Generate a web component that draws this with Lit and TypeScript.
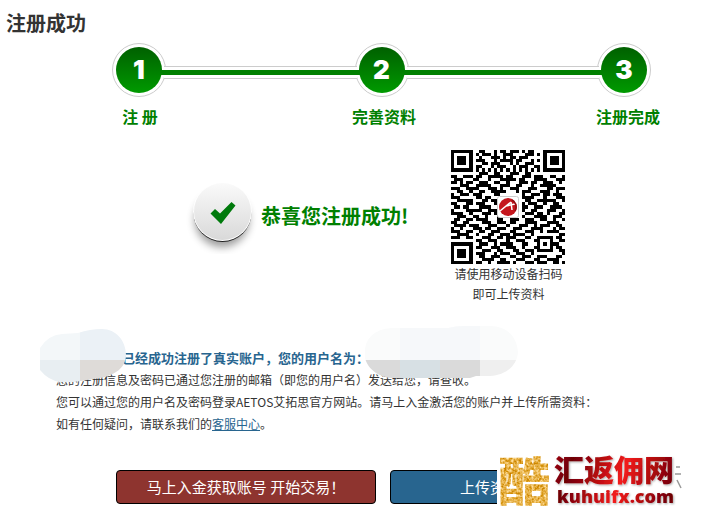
import { LitElement, html, css, svg } from "lit";
import { customElement } from "lit/decorators.js";

const QR_ROWS = [
  "1111111001100010110111010110001111111",
  "1000001010111010011100001110101000001",
  "1011101001000111010110111000001011101",
  "1011101011100010111101100010101011101",
  "1011101000110111000101001110001011101",
  "1000001011000101110010111001101000001",
  "1111111010101010101010101010101111111",
  "0000000001110011000111001100000000000",
  "1100111011001111101100011101110011001",
  "0111000110001000111110110001111000111",
  "1101011001110011001000111011001110010",
  "0001110011111000111001100010011111000",
  "1110011110001110100111000111000110111",
  "0011001001100111110001011100011100100",
  "1001110111000011000000010011101101110",
  "1110000011011000000000011110001000111",
  "0011111000110110000000001100111111001",
  "1100011011100010000000010111001001100",
  "0110110001111000000000011001110011110",
  "1000011111001110000000010011000111001",
  "1111001000111010000000001110110100011",
  "0011100110010001000000010001111001110",
  "0110011011110001100111001110011001001",
  "1100110000111001110110001111000111100",
  "0111101110001110001000111001011100110",
  "1001000111011001110011100011110001011",
  "1110011001100111000110001110010111100",
  "0011110010001100111011110010000000011",
  "1110011000111001101110001100111110110",
  "0000000011001110001001110001100010011",
  "1111111001110010111100011000101011100",
  "1000001011000111001110010001100010110",
  "1011101000111001100011001110111110011",
  "1011101011100010111001110010000000001",
  "1011101001100111000110011100111000110",
  "1000001000111100110001110001100111100",
  "1111111011001001111010001110111001101",
];

const qrPath = QR_ROWS.map((row, y) =>
  [...row].map((c, x) => (c === "1" ? `M${x} ${y}h1v1h-1z` : "")).join("")
).join("");

@customElement("step-track")
class StepTrack extends LitElement {
  static styles = css`
    :host { display: block; }
    .track {
      display: flex;
      align-items: flex-start;
      padding: 0 57px 0 112px;
    }
    .ring {
      box-sizing: border-box;
      flex: none;
      width: 54px;
      height: 54px;
      padding: 3px;
      border: 1px solid #ccc;
      border-radius: 50%;
      background: #fff;
    }
    .disc {
      display: flex;
      align-items: center;
      justify-content: center;
      height: 100%;
      border-radius: 50%;
      background: linear-gradient(#006000, #009a00);
      color: #fff;
      font: 900 26px/26px Inter, "Open Sans", sans-serif;
    }
    .link {
      position: relative;
      flex: 1;
      height: 5px;
      margin: 23px -2px 0;
      padding: 3px 0;
      border: solid #ccc;
      border-width: 1px 0;
      background: #fff;
    }
    .bar {
      height: 5px;
      margin: 0 -3px;
      background: #008000;
    }
    .labels {
      display: flex;
      justify-content: space-between;
      margin: 7px 0 0;
      padding: 0 48px 0 108px;
      list-style: none;
      color: #008000;
      font-size: 16px;
      font-weight: bold;
      line-height: 24px;
    }
    .label { width: 64px; text-align: center; white-space: nowrap; }
  `;
  render() {
    const link = html`<div class="link"><div class="bar"></div></div>`;
    const dot = (n: number) => html`<div class="ring"><div class="disc">${n}</div></div>`;
    return html`
      <div class="track">${dot(1)}${link}${dot(2)}${link}${dot(3)}</div>
      <ol class="labels">
        <li class="label">注 册</li>
        <li class="label">完善资料</li>
        <li class="label">注册完成</li>
      </ol>
    `;
  }
}

@customElement("qr-card")
class QrCard extends LitElement {
  static styles = css`
    :host { display: block; width: 114px; text-align: center; }
    .code { display: block; width: 114px; height: 114px; }
    .caption { margin: 0; font-size: 12px; line-height: 20px; }
  `;
  render() {
    return html`
      <svg class="code" viewBox="0 0 114 114" role="img" aria-label="二维码">
        <g transform="scale(3.081)" shape-rendering="crispEdges"><path d=${qrPath} /></g>
        ${svg`
          <rect x="46.500" y="46.500" width="21" height="21" rx="2" fill="#fff" stroke="#ccc" />
          <circle cx="57" cy="57" r="9" fill="#c5161d" />
          <path d="M49 61L60 52M55 56L64 54M60 52L61 60" fill="none" stroke="#fff" stroke-width="1.500" />
          <path d="M61 50a8 8 0 0 1 3 11" fill="none" stroke="#8d0d12" stroke-width="1.500" />
        `}
      </svg>
      <p class="caption">请使用移动设备扫码<br />即可上传资料</p>
    `;
  }
}

@customElement("site-stamp")
class SiteStamp extends LitElement {
  static styles = css`
    :host { display: block; }
    .art { display: block; width: 190px; height: 64px; overflow: visible; }
    .gold { font: 900 52px "Noto Sans CJK SC", sans-serif; }
    .name { font: 900 30px "Noto Sans CJK SC", sans-serif; }
    .site { font: 800 18px "Open Sans", sans-serif; }
  `;
  render() {
    return html`
      <svg class="art" viewBox="0 0 190 64" role="img" aria-label="酷 汇返佣网 kuhuifx.com">
        <defs>
          <linearGradient id="red" gradientUnits="userSpaceOnUse" x1="72" y1="20" x2="122" y2="36" spreadMethod="reflect">
            <stop offset="0" stop-color="#6e0006" />
            <stop offset="0.5" stop-color="#b00a0e" />
            <stop offset="1" stop-color="#f21c1c" />
          </linearGradient>
          <filter id="grain" x="0" y="0" width="1" height="1" color-interpolation-filters="sRGB">
            <feTurbulence type="fractalNoise" baseFrequency="0.4" numOctaves="2" seed="4" result="n" />
            <feColorMatrix in="n" type="matrix"
              values="0.400 0 0 0 0.700  0.700 0 0 0 0.340  1.300 0 0 0 -0.380  0 0 0 0 1" result="g" />
            <feComposite in="g" in2="SourceGraphic" operator="in" />
          </filter>
          <filter id="shade" x="-0.1" y="-0.1" width="1.2" height="1.3">
            <feDropShadow dx="1" dy="1" stdDeviation="1" flood-color="#000" flood-opacity="0.35" />
          </filter>
        </defs>
        <rect width="176" height="64" fill="#fff" />
        <path d="M179 17h4M178 24h6M180 30l4 8" stroke="#999" stroke-width="1.500" fill="none" />
        <text class="gold" x="1" y="51" fill="#e0ad45" filter="url(#grain)">酷</text>
        <g fill="url(#red)" filter="url(#shade)">
          <text class="name" x="57" y="31">汇返佣网</text>
          <text class="site" x="60" y="53">kuhuifx.com</text>
        </g>
      </svg>
    `;
  }
}

@customElement("app-root")
class AppRoot extends LitElement {
  static styles = css`
    :host {
      display: block;
      background: #fff;
      color: #333;
      font-family: "Noto Sans CJK SC", "Noto Sans", sans-serif;
    }
    .page { padding-top: 9px; overflow: hidden; }
    .title { margin: 0 0 6px; padding-left: 6px; font-size: 20px; line-height: 28px; }
    .result {
      display: flex;
      align-items: flex-start;
      gap: 43px;
      margin-top: 22px;
      padding-left: 185px;
    }
    .success { display: flex; align-items: center; margin-top: 28px; color: #008000; }
    .tick { display: block; width: 76px; height: 76px; }
    .headline { margin: 0; font-size: 20px; line-height: 28px; white-space: nowrap; }
    .notice {
      position: relative;
      margin-top: 43px;
      padding-left: 56px;
      font-size: 12px;
      line-height: 22px;
    }
    .line { margin: 0; }
    .account { padding-left: 66px; color: #28658f; font-size: 13px; font-weight: bold; }
    .help { color: #28658f; text-decoration: underline; }
    .masks { position: absolute; left: 40px; top: -23px; width: 480px; height: 60px; }
    .actions { display: flex; gap: 14px; margin-top: 35px; padding: 0 0 14px 116px; }
    .action {
      box-sizing: border-box;
      width: 260px;
      height: 34px;
      padding: 0;
      border: 1px solid #000;
      border-radius: 4px;
      color: #fff;
      font: 15px/22px "Noto Sans CJK SC", sans-serif;
    }
    .pay { background: #8e342f; }
    .upload { padding-left: 69px; background: #28658f; text-align: left; }
    .slot { position: relative; }
    .stamp { position: absolute; left: 107px; top: -20px; }
  `;
  render() {
    return html`
      <main class="page" lang="zh-CN">
        <h1 class="title">注册成功</h1>
        <step-track></step-track>
        <section class="result">
          <div class="success">
            <svg class="tick" viewBox="0 0 76 76" aria-hidden="true">
              <defs>
                <linearGradient id="face" x1="0" y1="0" x2="0" y2="1">
                  <stop offset="0" stop-color="#fafafa" />
                  <stop offset="1" stop-color="#d9d9d9" />
                </linearGradient>
                <filter id="soft" x="-0.3" y="-0.3" width="1.6" height="1.6"><feGaussianBlur stdDeviation="4" /></filter>
              </defs>
              <circle cx="37" cy="42" r="27" fill="#000" opacity="0.4" filter="url(#soft)" />
              <circle cx="37.500" cy="35" r="29" fill="#222" />
              <circle cx="37.500" cy="33.500" r="29.500" fill="#fff" />
              <circle cx="37.500" cy="33.500" r="28.500" fill="url(#face)" />
              <path d="M25.500 35.500l4.500-4.500 5 4.500L46.500 24l4 3.500L36 46z" fill="#007a0c" />
            </svg>
            <h2 class="headline">恭喜您注册成功!</h2>
          </div>
          <qr-card></qr-card>
        </section>
        <section class="notice">
          <p class="line account">已经成功注册了真实账户，您的用户名为：</p>
          <p class="line">您的注册信息及密码已通过您注册的邮箱（即您的用户名）发送给您，请查收。</p>
          <p class="line">您可以通过您的用户名及密码登录AETOS艾拓思官方网站。请马上入金激活您的账户并上传所需资料：</p>
          <p class="line">如有任何疑问，请联系我们的<a class="help" href="#service">客服中心</a>。</p>
          <svg class="masks" viewBox="0 0 480 60" aria-hidden="true">
            <defs>
              <clipPath id="left"><path d="M0 24Q8 11 22 10L38 9Q50 5 62 5C76 5 86 17 86 31C86 43 76 51 60 54L34 58H20Q8 56 0 46z" /></clipPath>
              <clipPath id="right"><path d="M325 28C325 12 338 4 354 4L408 4Q416 2 424 2H450C468 2 477 14 478 28C477 42 466 51 450 52L436 52L430 54H354C340 54 328 46 325 34z" /></clipPath>
            </defs>
            <g clip-path="url(#left)">
              <path d="M0 0h40v36H0z" fill="#f3f7f9" />
              <path d="M40 0h50v36H40z" fill="#ebf1f6" />
              <path d="M0 36h40v24H0z" fill="#e8eef2" />
              <path d="M40 36h50v24H40z" fill="#dedbd8" />
            </g>
            <g clip-path="url(#right)">
              <path d="M320 0h160v36H320z" fill="#fafbfb" />
              <path d="M360 0h80v36h-80z" fill="#f6f8fa" />
              <path d="M320 36h120v24H320z" fill="#dadada" />
              <path d="M360 36h40v24h-40z" fill="#d7e0e4" />
              <path d="M440 36h40v24h-40z" fill="#efefef" />
            </g>
          </svg>
        </section>
        <div class="actions">
          <button class="action pay" type="button">马上入金获取账号 开始交易！</button>
          <div class="slot">
            <button class="action upload" type="button">上传资料</button>
            <site-stamp class="stamp"></site-stamp>
          </div>
        </div>
      </main>
    `;
  }
}
